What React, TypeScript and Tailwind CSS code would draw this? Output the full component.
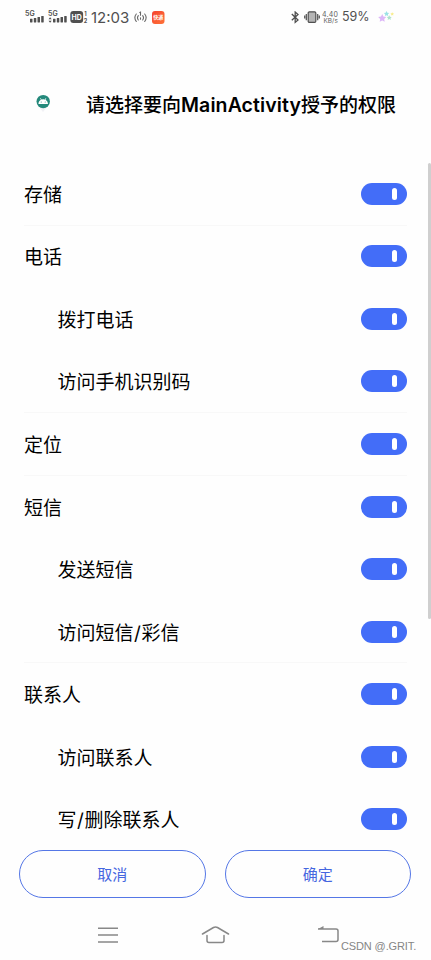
import React, { useState } from 'react';

interface Permission {
  id: string;
  label: string;
  child?: boolean;
  divider?: boolean;
}

const permissions: Permission[] = [
  { id: 'storage', label: '存储', divider: true },
  { id: 'phone', label: '电话' },
  { id: 'call', label: '拨打电话', child: true },
  { id: 'imei', label: '访问手机识别码', child: true, divider: true },
  { id: 'location', label: '定位', divider: true },
  { id: 'sms', label: '短信' },
  { id: 'sms-send', label: '发送短信', child: true },
  { id: 'sms-read', label: '访问短信/彩信', child: true, divider: true },
  { id: 'contacts', label: '联系人' },
  { id: 'contacts-read', label: '访问联系人', child: true },
  { id: 'contacts-write', label: '写/删除联系人', child: true },
];

function Signal({ dual }: { dual?: boolean }) {
  return (
    <svg width="21" height="14" viewBox="0 0 21 14" fill="#505050">
      <text x="0" y="5.6" fontSize="7" fontWeight="600" fontFamily="Inter, sans-serif">5G</text>
      {dual && <path d="M0.5 9.3l1.6-2 1.6 2zM0.5 10.7l1.6 2 1.6-2z" />}
      <rect x="5" y="8.7" width="2.5" height="3.8" rx=".4" />
      <rect x="8.8" y="7.9" width="2.5" height="4.6" rx=".4" />
      <rect x="12.5" y="6.9" width="2.5" height="5.6" rx=".4" />
      <rect x="16.2" y="5.9" width="2.5" height="6.6" rx=".4" />
    </svg>
  );
}

function StatusBar() {
  return (
    <div className="flex h-[34px] items-center justify-between pl-[25px] pr-9 font-['Inter',sans-serif] text-[#505050]">
      <div className="flex items-center">
        <div className="flex w-[23px]"><Signal /></div>
        <div className="flex w-[22px]"><Signal dual /></div>
        <svg className="mr-[3px]" width="18" height="14" viewBox="0 0 18 14" fontFamily="Inter, sans-serif" fontWeight="700">
          <rect x="0.3" y="1" width="12.8" height="12" rx="3" fill="#505050" />
          <text x="1.6" y="9.5" fontSize="7" fill="#fff">HD</text>
          <text x="14.2" y="5.8" fontSize="5.5" fill="#505050">1</text>
          <text x="13.7" y="13" fontSize="5.5" fill="#505050">2</text>
        </svg>
        <span className="w-[43px] whitespace-nowrap text-[15px] leading-none">12:03</span>
        <svg width="13" height="13" viewBox="0 0 13 13" fill="none" stroke="#666" strokeWidth="1.1" strokeLinecap="round">
          <path d="M2.3 3Q-0.6 6.5 2.3 10.5M4.3 4.6Q2.7 6.7 4.3 9M10.7 3Q13.6 6.5 10.7 10.5M8.7 4.6Q10.3 6.7 8.7 9M5.8 1.5l.7-.4v3.2M6.5 6.7v1.6" />
        </svg>
        <svg className="ml-[5px]" width="13" height="13" viewBox="0 0 13 13">
          <defs>
            <linearGradient id="app" x1="0" y1="0" x2="1" y2="1">
              <stop stopColor="#f4432f" />
              <stop offset="1" stopColor="#ff7338" />
            </linearGradient>
          </defs>
          <rect width="12.5" height="13" rx="3" fill="url(#app)" />
          <text x="1.3" y="8.2" fontSize="5" fontWeight="700" fill="#fff" fontFamily="'Noto Sans CJK SC', sans-serif">快递</text>
        </svg>
      </div>
      <div className="flex items-center">
        <svg width="9" height="13" viewBox="0 0 9 13" fill="none" stroke="#505050" strokeWidth="1.3">
          <path d="M.8 3l6.2 6L4.2 11.4V1L7 3.4 .8 9.2" />
        </svg>
        <svg className="ml-1" width="16" height="13" viewBox="0 0 16 13" fill="none" stroke="#505050" strokeWidth="1.2">
          <rect x="4.2" y="0.8" width="7.6" height="10.6" rx="1.2" fill="#b5b5b5" />
          <path d="M2.3 3v6.2M.7 4.5v3M13.7 3v6.2M15.3 4.5v3" />
        </svg>
        <svg className="ml-[2px]" width="18" height="15" viewBox="0 0 18 15" fill="#606060" fontFamily="Inter, sans-serif">
          <text x="0" y="6.5" fontSize="7" textLength="16">4.40</text>
          <text x="1.5" y="13.2" fontSize="6.4" textLength="14.3">KB/s</text>
        </svg>
        <span className="ml-[2px] w-9 whitespace-nowrap pt-px text-[12.5px] leading-none">59%</span>
        <svg width="17" height="13" viewBox="0 0 17 13">
          <path d="M4.2 3l1.2 2.6 2.9.4-2.1 1.9.5 2.9-2.5-1.3-2.5 1.3.5-2.9L.1 6 3 5.6z" fill="#ddb8f8" />
          <path d="M8.5 0l.9 1.7 1.8.2-1.3 1.3.3 1.8-1.7-.8-1.6.8.3-1.8L5.9 1.9l1.8-.2z" fill="#9be3e6" />
          <path d="M11.2 4.2l.8 1.6 1.7.2-1.2 1.2.3 1.7-1.6-.8-1.5.8.3-1.7L8.8 6l1.6-.2z" fill="#aee2cb" />
          <path d="M14.2 1.2l.6 1.1 1.2.2-.9.9.2 1.2-1.1-.6-1.1.6.2-1.2-.9-.9 1.2-.2z" fill="#f8ed8e" />
        </svg>
      </div>
    </div>
  );
}

function Toggle({ on, label, onChange }: { on: boolean; label: string; onChange: () => void }) {
  return (
    <button
      type="button"
      role="switch"
      aria-checked={on}
      aria-label={label}
      onClick={onChange}
      className={`flex h-[22px] w-[46px] items-center rounded-full px-[10px] ${on ? 'justify-end bg-[#436df8]' : 'justify-start bg-[#cccccc]'}`}
    >
      <span className="h-3 w-[5px] rounded-full bg-white" />
    </button>
  );
}

export default function App() {
  const [granted, setGranted] = useState<string[]>(permissions.map((p) => p.id));

  const toggle = (id: string) => {
    setGranted((prev) => (prev.includes(id) ? prev.filter((g) => g !== id) : [...prev, id]));
  };

  return (
    <div className="relative flex h-[960px] w-[431px] flex-col overflow-hidden bg-[#fefefe] font-['Inter','Noto_Sans_CJK_SC',sans-serif] text-black">
      <StatusBar />

      {/* Title */}
      <header className="flex h-[129px] items-start pl-9 pt-[57px]">
        <svg className="mt-[3px] shrink-0" width="15" height="20" viewBox="0 0 15 20">
          <path d="M3 13h8l-4 5z" fill="#f1f1f5" />
          <circle cx="7.2" cy="7.6" r="6.7" fill="#24897b" />
          <path d="M2.4 9.9c.2-2.2 1.2-3.5 2.5-4.2L4.1 4.2l.5-.3.9 1.6a5 5 0 013.4 0l.9-1.6.5.3-.8 1.5c1.3.7 2.3 2 2.5 4.2z" fill="#fff" />
          <circle cx="5.2" cy="7.9" r=".5" fill="#24897b" />
          <circle cx="9.2" cy="7.9" r=".5" fill="#24897b" />
        </svg>
        <h1 className="ml-[35px] whitespace-nowrap text-[19px] font-medium leading-7">
          请选择要向<span className="text-[19.5px] font-semibold tracking-[0.1px]">MainActivity</span>授予的权限
        </h1>
      </header>

      {/* Permission list */}
      <div className="flex h-[687px] shrink-0 justify-between overflow-hidden">
        <ul className="w-[407px] pl-6">
          {permissions.map((p) => (
            <li
              key={p.id}
              className={`flex h-[62.55px] items-center justify-between border-b ${p.divider ? 'border-[#f8f8f8]' : 'border-transparent'} ${p.child ? 'pl-[33.5px]' : ''}`}
            >
              <span className="pt-1 text-[19px] leading-7">
                {p.label.split('/').map((part, i) => (
                  <React.Fragment key={part}>
                    {i > 0 && <span className="px-[0.6px]">/</span>}
                    {part}
                  </React.Fragment>
                ))}
              </span>
              <Toggle on={granted.includes(p.id)} label={p.label} onChange={() => toggle(p.id)} />
            </li>
          ))}
        </ul>
        <div className="h-[456px] w-[3px] rounded-full bg-[#cfcfcf]" />
      </div>

      {/* Actions */}
      <div className="flex h-12 shrink-0 gap-[19px] pl-[19px] pr-5 text-[15px] text-[#4566e0]">
        <button type="button" className="flex-1 rounded-full border-[1.5px] border-[#5577e6] pt-[2px]">取消</button>
        <button type="button" className="flex-1 rounded-full border-[1.5px] border-[#5577e6] pt-[2px]">确定</button>
      </div>

      {/* System navigation */}
      <nav className="flex h-[62px] items-start pl-[97px] pt-[28px]">
        <svg width="22" height="20" viewBox="0 0 22 20" stroke="#888" strokeWidth="1.5">
          <path d="M1 2.2h20M1 9h20M1 16h20" />
        </svg>
        <svg className="ml-[82px]" width="30" height="20" viewBox="0 0 30 20" fill="none" stroke="#888" strokeWidth="1.5" strokeLinecap="round" strokeLinejoin="round">
          <path d="M1.5 8L12.5 1.5Q14.5.4 16.5 1.5L27.5 8M6 9.5V14.5Q6 16.5 8 16.5H21Q23 16.5 23 14.5V9.5" />
        </svg>
        <svg className="ml-[86px]" width="24" height="20" viewBox="0 0 24 20" fill="none" stroke="#888" strokeWidth="1.5">
          <path d="M1 3H19Q21 3 21 5V13.5Q21 15.5 19 15.5H5" />
          <path d="M1 3L6.5 0V3z" fill="#888" stroke="none" />
        </svg>
      </nav>

      <span className="absolute left-[341px] top-[940px] whitespace-nowrap font-['Liberation_Sans',sans-serif] text-[11px] leading-[13px] tracking-[-0.12px] text-[#858585]">
        CSDN @.GRIT.
      </span>
    </div>
  );
}
